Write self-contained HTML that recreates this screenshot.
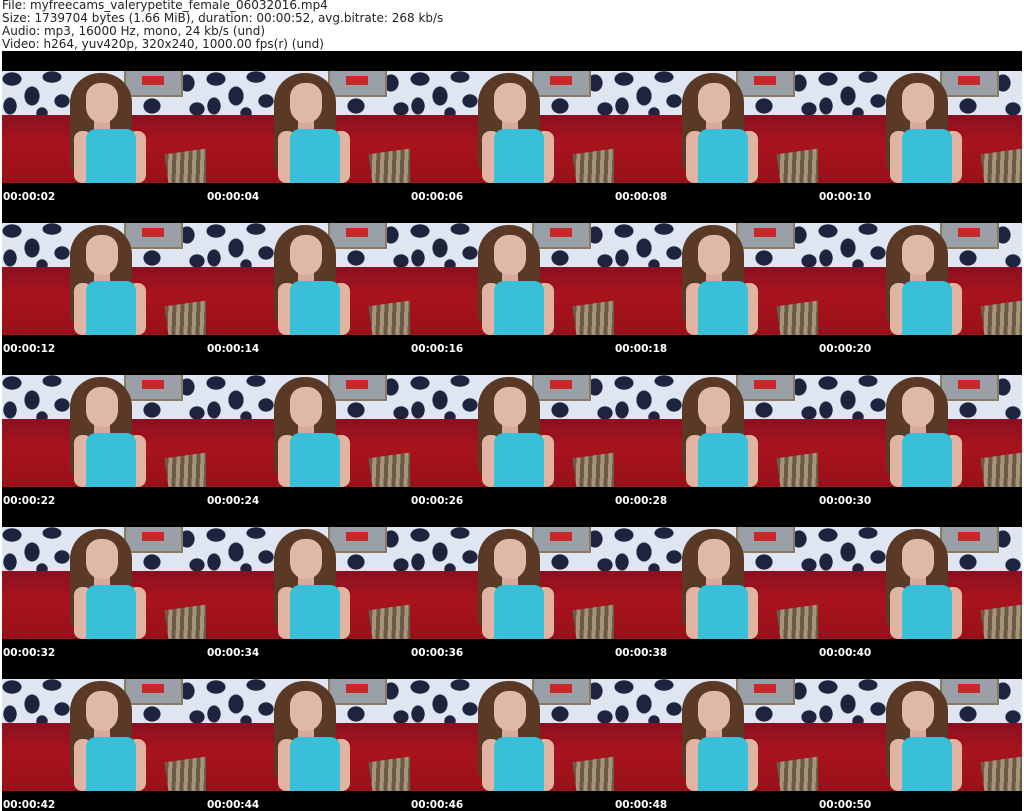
<!DOCTYPE html><html><head><style>
body{margin:0;width:1024px;height:811px;background:#fff;overflow:hidden;font-family:"DejaVu Sans","Liberation Sans",sans-serif}
.hd{position:absolute;left:2px;top:-1px;font-size:12px;line-height:13px;color:#222}
.grid{position:absolute;left:2px;top:51px;width:1020px;height:760px;background:#000}
.c{position:absolute;width:204px;height:152px}
.im{position:absolute;left:0;top:20px;width:204px;height:112px;overflow:hidden;background:#e8eef8}
.wp{position:absolute;left:0;top:0;width:204px;height:50px;background:
radial-gradient(ellipse 10px 7px at 10px 8px,#1c2440 90%,transparent),radial-gradient(ellipse 8px 10px at 30px 25px,#1c2440 90%,transparent),
radial-gradient(ellipse 10px 6px at 50px 6px,#1c2440 90%,transparent),radial-gradient(ellipse 7px 9px at 8px 35px,#1c2440 90%,transparent),
radial-gradient(ellipse 8px 7px at 60px 30px,#1c2440 90%,transparent),radial-gradient(ellipse 9px 8px at 150px 35px,#1c2440 90%,transparent),
radial-gradient(ellipse 8px 9px at 185px 12px,#1c2440 90%,transparent),radial-gradient(ellipse 8px 7px at 195px 38px,#1c2440 90%,transparent),
radial-gradient(ellipse 7px 8px at 135px 8px,#1c2440 90%,transparent),radial-gradient(ellipse 6px 6px at 40px 42px,#1c2440 90%,transparent),#dfe6f2}
.fr{position:absolute;left:122px;top:0;width:55px;height:24px;background:#9aa0a8;border:2px solid #8a7a60;border-top:0}
.bus{position:absolute;left:140px;top:5px;width:22px;height:9px;background:#c8282c}
.sofa{position:absolute;left:0;top:44px;width:204px;height:68px;background:linear-gradient(#8a1020,#a8141e 40%,#9a1018)}
.cu{position:absolute;left:165px;top:80px;width:45px;height:40px;background:repeating-linear-gradient(100deg,#6a5a48 0 4px,#a89478 4px 8px);transform:rotate(-8deg)}
.hair{position:absolute;left:68px;top:2px;width:62px;height:100px;background:#5a3a26;border-radius:30px 30px 10px 10px}
.face{position:absolute;left:84px;top:12px;width:32px;height:40px;background:#e0b8a8;border-radius:14px 14px 16px 16px}
.neck{position:absolute;left:92px;top:48px;width:16px;height:14px;background:#d8aa98}
.arm1{position:absolute;left:72px;top:60px;width:18px;height:52px;background:#e0b4a0;border-radius:8px}
.arm2{position:absolute;left:126px;top:60px;width:18px;height:52px;background:#e0b4a0;border-radius:8px}
.top{position:absolute;left:84px;top:58px;width:50px;height:54px;background:#38c0da;border-radius:10px 10px 0 0}
.t{position:absolute;left:1px;top:140px;color:#fff;font-weight:bold;font-size:10.5px}
</style></head><body>
<div class="hd">File: myfreecams_valerypetite_female_06032016.mp4<br>Size: 1739704 bytes (1.66 MiB), duration: 00:00:52, avg.bitrate: 268 kb/s<br>Audio: mp3, 16000 Hz, mono, 24 kb/s (und)<br>Video: h264, yuv420p, 320x240, 1000.00 fps(r) (und)</div>
<div class="grid" id="g"></div>
<script>
var g=document.getElementById('g'),h='';
for(var r=0;r<5;r++)for(var c=0;c<5;c++){var n=(r*5+c+1)*2,s=(n<10?'0':'')+n;
h+='<div class="c" style="left:'+(c*204)+'px;top:'+(r*152)+'px"><div class="im"><div class="wp"></div><div class="fr"></div><div class="bus"></div><div class="sofa"></div><div class="cu"></div><div class="hair"></div><div class="arm1"></div><div class="arm2"></div><div class="neck"></div><div class="face"></div><div class="top"></div></div><div class="t">00:00:'+s+'</div></div>';}
g.innerHTML=h;
</script>
</body></html>
